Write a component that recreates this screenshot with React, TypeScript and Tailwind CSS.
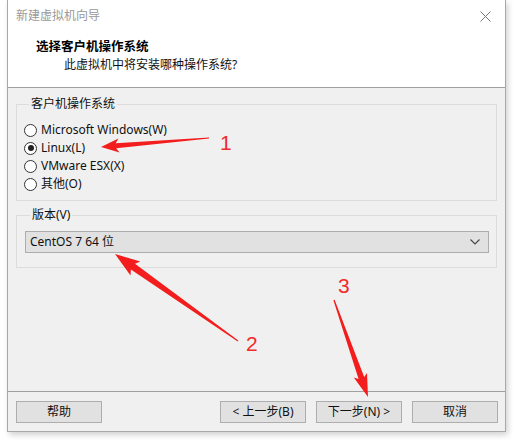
import React from "react";

const uiFont = {
  fontFamily: '"Segoe UI", "Noto Sans", "Noto Sans CJK SC", sans-serif',
};

type Pt = [number, number];

// tapered red arrow polygon: thin tail, wider neck, triangular head
function arrowPoints(tail: Pt, tip: Pt, headLen: number, headHalf: number, neckHalf: number, tailHalf: number) {
  const dx = tip[0] - tail[0];
  const dy = tip[1] - tail[1];
  const len = Math.hypot(dx, dy);
  const ux = dx / len;
  const uy = dy / len;
  const nx = -uy;
  const ny = ux;
  const bx = tip[0] - ux * headLen;
  const by = tip[1] - uy * headLen;
  const pts: Pt[] = [
    [tail[0] + nx * tailHalf, tail[1] + ny * tailHalf],
    [bx + nx * neckHalf, by + ny * neckHalf],
    [bx - ux * 3 + nx * headHalf, by - uy * 3 + ny * headHalf],
    tip,
    [bx - ux * 3 - nx * headHalf, by - uy * 3 - ny * headHalf],
    [bx - nx * neckHalf, by - ny * neckHalf],
    [tail[0] - nx * tailHalf, tail[1] - ny * tailHalf],
  ];
  return pts.map((p) => `${p[0].toFixed(1)},${p[1].toFixed(1)}`).join(" ");
}

function Radio({ label, checked }: { label: string; checked?: boolean }) {
  return (
    <div className="flex items-center h-[18px]">
      <span className="w-[13px] h-[13px] rounded-full border border-[#333] bg-white flex items-center justify-center">
        {checked && <span className="w-[6px] h-[6px] rounded-full bg-[#222]" />}
      </span>
      <span className="ml-[4px] text-[12px] text-[#111] leading-none">{label}</span>
    </div>
  );
}

function Btn({ children }: { children: React.ReactNode }) {
  return (
    <button className="w-[86px] h-[22px] bg-[#e1e1e1] border border-[#adadad] text-[12px] text-[#111] flex items-center justify-center leading-none">
      {children}
    </button>
  );
}

export default function App() {
  return (
    <div className="relative w-[513px] h-[440px] bg-white overflow-hidden" style={uiFont}>
      <div className="ml-[7px] w-[499px] h-[432px] border-l border-r border-b border-[#a8a8a8] bg-[#f0f0f0] flex flex-col shadow-[2px_3px_6px_rgba(0,0,0,0.18)]">
        {/* title bar */}
        <div className="h-[32px] bg-white flex items-center justify-between pl-[8px] pr-[14px]">
          <span className="text-[12px] text-[#999]">新建虚拟机向导</span>
          <svg width="11" height="11" viewBox="0 0 11 11">
            <path d="M0.5 0.5 L10.5 10.5 M10.5 0.5 L0.5 10.5" stroke="#777" strokeWidth="1" />
          </svg>
        </div>
        {/* header */}
        <div className="h-[56px] bg-white border-b border-[#a0a0a0] flex flex-col">
          <span className="ml-[28px] mt-[6px] text-[12.5px] font-bold text-black leading-[18px]">选择客户机操作系统</span>
          <span className="ml-[56px] text-[12px] text-[#111] leading-[18px]">此虚拟机中将安装哪种操作系统?</span>
        </div>
        {/* body */}
        <div className="flex-1 flex flex-col pl-[8px] pr-[8px]">
          <fieldset className="mt-[9px] h-[104px] border border-[#dcdcdc] pl-[7px]">
            <legend className="ml-[5px] px-[2px] text-[12px] text-[#111] leading-[14px]">客户机操作系统</legend>
            <div className="mt-[10px] flex flex-col">
              <Radio label="Microsoft Windows(W)" />
              <Radio label="Linux(L)" checked />
              <Radio label="VMware ESX(X)" />
              <Radio label="其他(O)" />
            </div>
          </fieldset>
          <fieldset className="mt-[7px] h-[60px] border border-[#dcdcdc] pl-[8px] pr-[7px]">
            <legend className="ml-[5px] px-[2px] text-[12px] text-[#111] leading-[14px]">版本(V)</legend>
            <div className="mt-[9px] h-[22px] bg-[#e1e1e1] border border-[#adadad] flex items-center justify-between pl-[4px] pr-[8px]">
              <span className="text-[12px] text-[#111] leading-none">CentOS 7 64 位</span>
              <svg width="10" height="6" viewBox="0 0 10 6">
                <path d="M0.5 0.5 L5 5 L9.5 0.5" fill="none" stroke="#444" strokeWidth="1.1" />
              </svg>
            </div>
          </fieldset>
        </div>
        {/* footer */}
        <div className="h-[40px] border-t border-[#a0a0a0] flex items-start pt-[9px] pl-[8px] pr-[7px]">
          <Btn>帮助</Btn>
          <div className="flex-1" />
          <div className="flex gap-[10px]">
            <Btn>&lt; 上一步(B)</Btn>
            <Btn>下一步(N) &gt;</Btn>
            <Btn>取消</Btn>
          </div>
        </div>
      </div>

      {/* annotations */}
      <svg className="absolute left-0 top-0 pointer-events-none" width="513" height="440" viewBox="0 0 513 440">
        <polygon points={arrowPoints([209, 138], [101, 147], 15, 7, 2.6, 0.5)} fill="#f31d1d" />
        <polygon points={arrowPoints([238, 341], [115, 254], 22, 8.5, 3.6, 0.6)} fill="#f31d1d" />
        <polygon points={arrowPoints([334, 300], [368, 397], 20, 7, 3, 0.6)} fill="#f31d1d" />
      </svg>
      <span className="absolute left-[220px] top-[132px] text-[21px] leading-none text-[#f32a2a]" style={{ fontFamily: '"Liberation Sans", Arial, sans-serif' }}>1</span>
      <span className="absolute left-[246px] top-[333px] text-[21px] leading-none text-[#f32a2a]" style={{ fontFamily: '"Liberation Sans", Arial, sans-serif' }}>2</span>
      <span className="absolute left-[338px] top-[275px] text-[21px] leading-none text-[#f32a2a]" style={{ fontFamily: '"Liberation Sans", Arial, sans-serif' }}>3</span>
    </div>
  );
}
